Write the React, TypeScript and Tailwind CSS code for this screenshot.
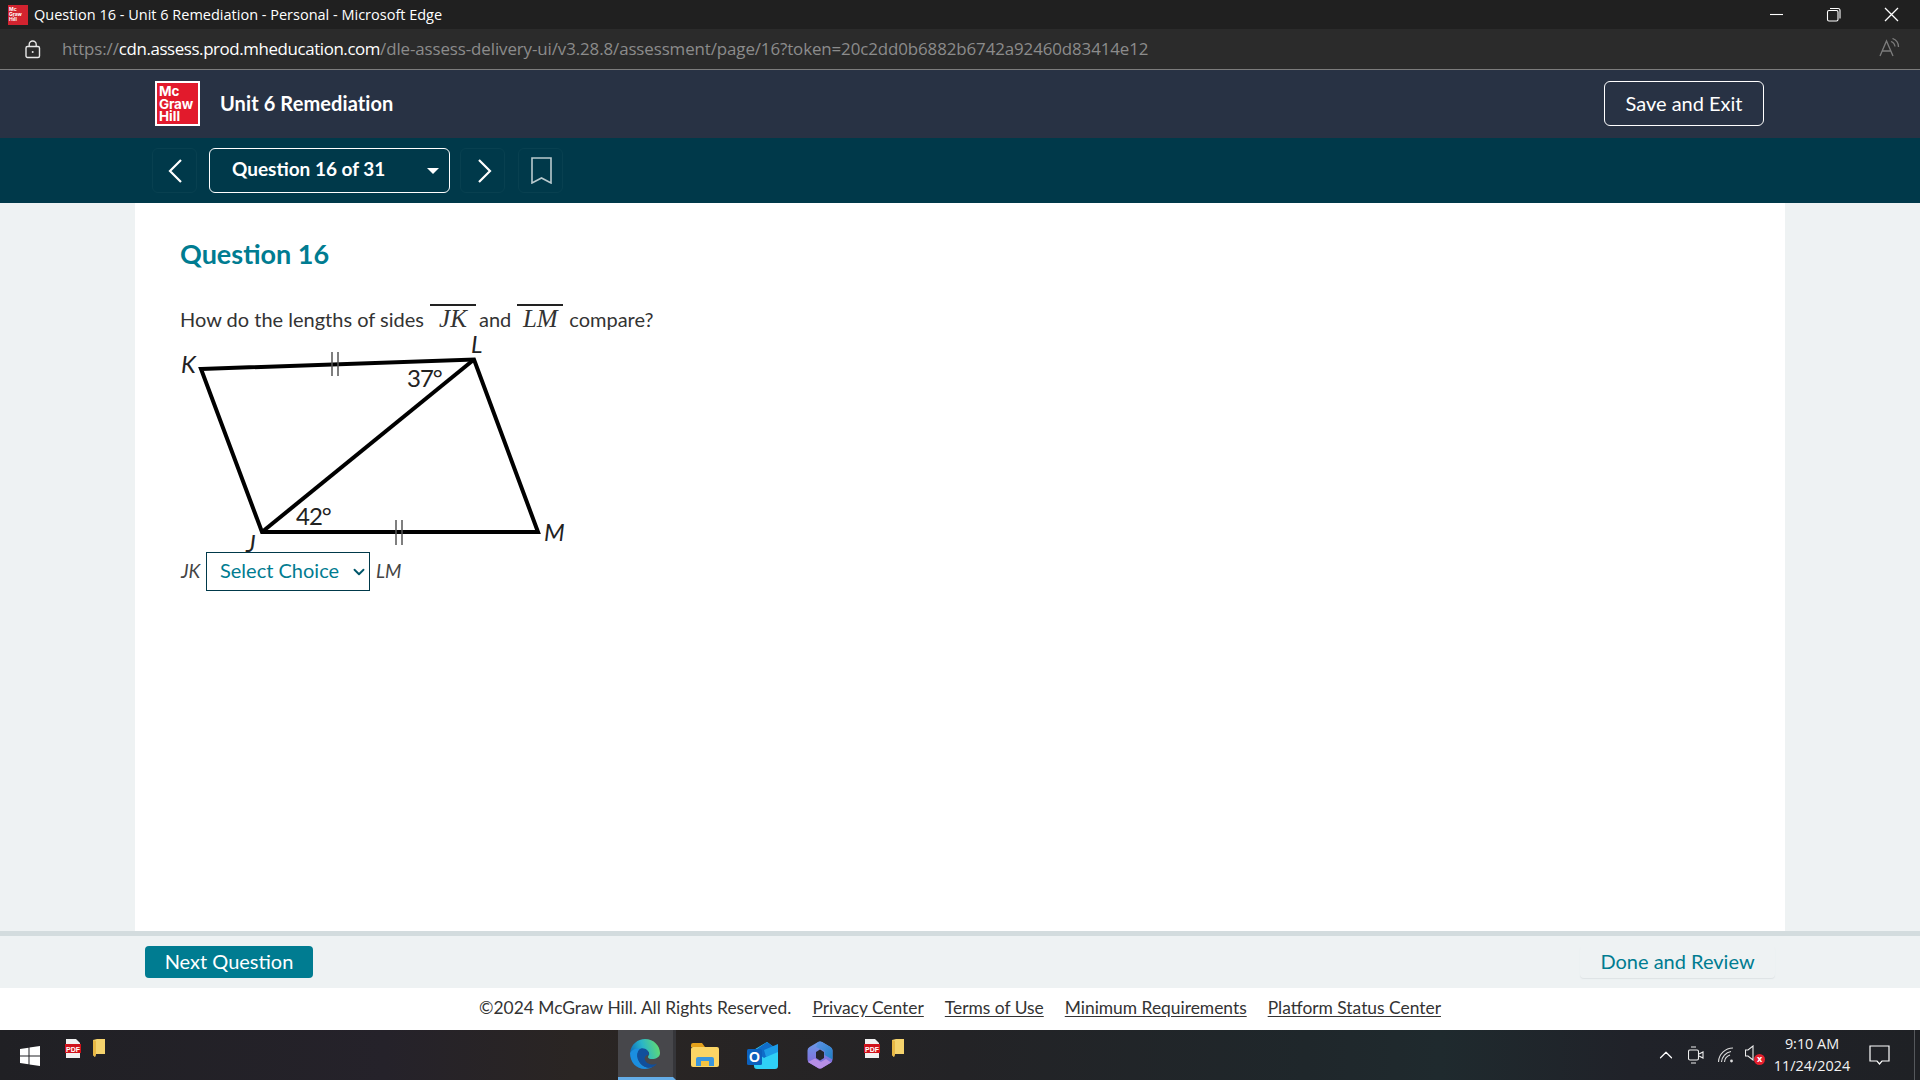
import { ChevronDown, ChevronUp } from "lucide-react";

const ui = "font-['Lato','Open_Sans',sans-serif]";
const segoe = "font-['Open_Sans','Noto_Sans',sans-serif]";

function Logo() {
  return (
    <div className="w-[45px] h-[45px] border-2 border-white bg-[#e21a2c] text-white font-bold text-[13.5px] leading-[12.5px] pl-[2px] pt-[2px] font-['Inter',sans-serif]">
      <div>Mc</div>
      <div className="tracking-[-0.2px]">Graw</div>
      <div>Hill</div>
    </div>
  );
}

function TitleBar() {
  return (
    <div className="h-[29px] bg-[#202020] flex items-center relative shrink-0">
      <div className="ml-2 w-5 h-5 bg-[#d2232f] text-white text-[5px] leading-[5px] font-bold pl-[1px] pt-[2px] font-['Inter',sans-serif]">
        <div>Mc</div>
        <div>Graw</div>
        <div>Hill</div>
      </div>
      <span className={`ml-[6px] text-white text-[14.5px] ${segoe}`}>Question 16 - Unit 6 Remediation - Personal - Microsoft Edge</span>
      <div className="absolute right-0 top-0 h-[29px]">
        <svg width="150" height="29" viewBox="1770 0 150 29" fill="none" stroke="#fff" strokeWidth="1.1">
          <path d="M1770 14.5h13" />
          <rect x="1827.5" y="10.5" width="10.5" height="10.5" rx="1.5" />
          <path d="M1830 8.5h8a2 2 0 0 1 2 2v8" />
          <path d="M1885 8l13 13M1898 8l-13 13" strokeWidth="1.3" />
        </svg>
      </div>
    </div>
  );
}

function AddressBar() {
  return (
    <div className="h-[41px] bg-[#2b2b2b] border-b border-[#7c7c7c] flex items-center relative shrink-0">
      <svg className="ml-[25px]" width="16" height="19" viewBox="0 0 16 19" fill="none" stroke="#e8e8e8" strokeWidth="1.4">
        <rect x="1" y="6.5" width="13.5" height="11" rx="1.5" />
        <path d="M4.2 6.5V4.5a3.5 3.5 0 0 1 7 0v2" />
        <circle cx="7.7" cy="12" r="1" fill="#e8e8e8" stroke="none" />
      </svg>
      <span className={`ml-[21px] text-[16.9px] tracking-[-0.1px] text-[#8c8c8c] ${segoe}`}>
        https://<span className="text-white tracking-[-0.4px]">cdn.assess.prod.mheducation.com</span>/dle-assess-delivery-ui/v3.28.8/assessment/page/16?token=20c2dd0b6882b6742a92460d83414e12
      </span>
      <div className="absolute right-[20px] top-[9px]">
        <svg width="21" height="20" viewBox="0 0 21 20" fill="none" stroke="#7d7d7d" strokeWidth="1.3">
          <path d="M1 18L7.5 3l6.5 15M3.5 13h8" />
          <path d="M12 3.5a6 6 0 0 1 4 5M13.5 0.5a9 9 0 0 1 6 8.5" />
        </svg>
      </div>
    </div>
  );
}

function Header() {
  return (
    <div className="h-[68px] bg-[#283244] flex items-center shrink-0 pl-[155px] pr-[156px] pb-[1px]">
      <Logo />
      <span className={`ml-5 text-white font-bold text-[20px] tracking-[0.1px] pb-[2px] ${ui}`}>Unit 6 Remediation</span>
      <button className={`ml-auto w-[160px] h-[45px] border border-white rounded-md text-white text-[20px] pb-[1px] ${ui}`}>Save and Exit</button>
    </div>
  );
}

function NavBar() {
  const ghost = "h-[45px] w-[45px] flex items-center justify-center rounded-md border border-[#084050]";
  return (
    <div className="h-[65px] bg-[#00394a] flex items-center shrink-0 pl-[152px]">
      <button className={ghost}>
        <svg width="14" height="24" viewBox="0 0 14 24" fill="none" stroke="#fff" strokeWidth="2.2">
          <path d="M13 1L2 12l11 11" />
        </svg>
      </button>
      <button className={`ml-3 w-[241px] h-[45px] border border-white rounded-md flex items-center pl-[22px] pr-[10px] pb-[2px] text-white font-bold text-[19px] ${ui}`}>
        Question 16 of 31
        <span className="ml-auto mt-[2px] w-0 h-0 border-x-[6px] border-x-transparent border-t-[6px] border-t-white" />
      </button>
      <button className={`ml-[10px] pl-[4px] ${ghost}`}>
        <svg width="14" height="24" viewBox="0 0 14 24" fill="none" stroke="#fff" strokeWidth="2.2">
          <path d="M1 1l11 11L1 23" />
        </svg>
      </button>
      <button className={`ml-[13px] pl-[1px] ${ghost}`}>
        <svg width="21" height="27" viewBox="0 0 21 27" fill="none" stroke="#b9cace" strokeWidth="1.6">
          <path d="M1 1h19v25l-9.5-5-9.5 5z" />
        </svg>
      </button>
    </div>
  );
}

function Segment({ text, className }: { text: string; className: string }) {
  return (
    <span className={`inline-block ml-[6px] w-[46px] text-center border-t-2 border-[#222] font-['Liberation_Serif',serif] italic text-[25px] leading-[26px] h-[28px] align-baseline ${className}`}>
      {text}
    </span>
  );
}

function Diagram() {
  return (
    <svg className="block overflow-visible" width="400" height="222" viewBox="180 330 400 222">
      <g fill="none" stroke="#000" strokeWidth="4" strokeLinejoin="miter">
        <path d="M201 369L474 359.5L538 532H262Z" />
        <path d="M262 532L474 359.5" />
      </g>
      <g stroke="#555" strokeWidth="1.5">
        <path d="M332 352v24M338 352v24M396 520v25M402 520v25" />
      </g>
      <g className="font-['Lato',sans-serif]" fill="#222" fontSize="24">
        <text x="181" y="373" fontStyle="italic">K</text>
        <text x="471" y="353" fontStyle="italic">L</text>
        <text x="407" y="387" letterSpacing="-1">37°</text>
        <text x="296" y="525" letterSpacing="-1">42°</text>
        <text x="544" y="541" fontStyle="italic">M</text>
        <text x="246" y="552" fontStyle="italic">J</text>
      </g>
    </svg>
  );
}

function Question() {
  return (
    <div className="flex-1 flex justify-center bg-[#eef2f3] min-h-0">
      <div className={`w-[1650px] bg-white px-[45px] pt-[33px] text-[#333] ${ui}`}>
        <h1 className="text-[27px] leading-[36px] font-bold text-[#007c91]">Question 16</h1>
        <p className="mt-[32px] h-[26px] text-[20px] leading-[30px] text-[#333]">
          How do the lengths of sides<Segment text="JK" className="mr-[3px]" />and<Segment text="LM" className="mr-[6px]" />compare?
        </p>
        <Diagram />
        <div className="relative flex items-center text-[19px] italic text-[#444] h-[39px]">
          <span className="w-[26px] pl-[1px]">JK</span>
          <div className="w-[164px] h-[39px] bg-white border border-[#00394a] flex items-center pl-[13px] pr-[1px] pb-[4px] text-[#007c91] text-[20px] not-italic">
            Select Choice
            <ChevronDown className="ml-auto mt-[4px]" size={18} strokeWidth={2.5} color="#00566a" />
          </div>
          <span className="ml-[6px]">LM</span>
        </div>
      </div>
    </div>
  );
}

function ActionBar() {
  return (
    <div className={`h-[57px] shrink-0 bg-[#eef2f3] border-t-[5px] border-[#d3dcde] flex items-center pl-[145px] pr-[145px] text-[20px] ${ui}`}>
      <button className="w-[168px] h-[32px] bg-[#007c91] rounded-[4px] text-white pb-[2px]">Next Question</button>
      <button className="ml-auto w-[195px] h-[32px] rounded-[4px] text-[#007c91] pb-[2px] shadow-[0_1px_1px_#dde3e5]">Done and Review</button>
    </div>
  );
}

function Legal() {
  const links = ["Privacy Center", "Terms of Use", "Minimum Requirements", "Platform Status Center"];
  return (
    <div className={`h-[42px] shrink-0 bg-white flex items-center justify-center gap-[21px] pb-[2px] text-[17.4px] text-[#333] ${ui}`}>
      <span>©2024 McGraw Hill. All Rights Reserved.</span>
      {links.map((l) => (
        <a key={l} className="underline underline-offset-2" href="#">{l}</a>
      ))}
    </div>
  );
}

function PdfIcon() {
  return (
    <svg width="16" height="19" viewBox="0 0 16 19">
      <path d="M1 0h10l4 4v15H1z" fill="#f1f1f1" />
      <rect x="0" y="5" width="16" height="9" fill="#d0121b" />
      <text x="8" y="12.5" textAnchor="middle" fontSize="7" fontWeight="700" fill="#fff" className="font-['Liberation_Sans',sans-serif]">PDF</text>
    </svg>
  );
}

function FolderIcon() {
  return (
    <svg width="12" height="18" viewBox="0 0 12 18">
      <path d="M0 1l4 -1h8v15H3l-1 3-2-2z" fill="#f5d36d" />
      <path d="M0 1l3 1v13l-1 3-2-2z" fill="#e8b845" />
    </svg>
  );
}

function EdgeIcon() {
  return (
    <svg width="30" height="30" viewBox="0 0 30 30">
      <defs>
        <linearGradient id="edgeTop" x1="0" y1="0.6" x2="1" y2="0.4">
          <stop offset="0" stopColor="#0c6fbd" />
          <stop offset="0.45" stopColor="#2ab5c9" />
          <stop offset="1" stopColor="#63dc70" />
        </linearGradient>
      </defs>
      <path d="M0 14C1 5 8 0 15 0c9 0 15 7 15 14 0 4-4 6-8 6-4 0-5-2-3-4 1-3-2-6-7-6-6 0-11 3-12 4z" fill="url(#edgeTop)" />
      <path d="M0 14c2-4 7-5 11-4.500C6 12 7 22 12 26c3 3 8 3 12 1-3 2-6 3-9 3C6 30 0 23 0 14z" fill="#1b8ee0" />
      <path d="M11 9.500c4-1 8 2 8 6.500-3 0-5 2-4 5 1 3 5 5 9 4.500 1 0 2-.5 3-1-2 3-6 5-10 4-7-2-12-10-9-16 .7-1.500 2-2.700 3-3z" fill="#114f9c" />
    </svg>
  );
}

function ExplorerIcon() {
  return (
    <svg width="28" height="24" viewBox="0 0 28 24">
      <path d="M0 2a2 2 0 0 1 2-2h9l3 4H0z" fill="#e4a11b" />
      <rect x="0" y="4" width="28" height="20" rx="2" fill="#fbd565" />
      <path d="M5 23v-7a2 2 0 0 1 2-2h14a2 2 0 0 1 2 2v7h-5v-5h-8v5z" fill="#3a96dd" />
      <rect x="10" y="18" width="8" height="5" fill="#f5c33f" />
    </svg>
  );
}

function OutlookIcon() {
  return (
    <svg width="31" height="27" viewBox="0 0 31 27">
      <path d="M5 9L20 0l11 8v16a3 3 0 0 1-3 3H10a3 3 0 0 1-3-3z" fill="#2fd0f5" />
      <path d="M7 9L20 0l11 8-14 8z" fill="#0f6cc9" />
      <path d="M17 8L31 2v8L19 15z" fill="#1c9be6" />
      <rect x="0" y="7" width="15" height="16" rx="1.5" fill="#0c61bd" />
      <text x="7.500" y="20" textAnchor="middle" fontSize="14" fontWeight="700" fill="#fff" className="font-['Liberation_Sans',sans-serif]">O</text>
    </svg>
  );
}

function CopilotIcon() {
  return (
    <svg width="26" height="28" viewBox="0 0 26 28">
      <defs>
        <linearGradient id="copLeft" x1="0" y1="0" x2="0" y2="1">
          <stop offset="0" stopColor="#6a9be8" />
          <stop offset="1" stopColor="#8a62d8" />
        </linearGradient>
        <linearGradient id="copTop" x1="0" y1="0" x2="1" y2="1">
          <stop offset="0" stopColor="#5f93e6" />
          <stop offset="1" stopColor="#1f7fc4" />
        </linearGradient>
      </defs>
      <path d="M11 1a4 4 0 0 1 4 0l8.500 5a4 4 0 0 1 2 3.500v9a4 4 0 0 1-2 3.500L15 27a4 4 0 0 1-4 0l-8.500-5a4 4 0 0 1-2-3.500v-9a4 4 0 0 1 2-3.500z" fill="url(#copLeft)" />
      <path d="M11 1a4 4 0 0 1 4 0l8.500 5a4 4 0 0 1 2 3.500v9l-8-4.500V10L9 6z" fill="url(#copTop)" />
      <path d="M1 21l7-3.500 6 3.500 5-3 5 3.500L15 27a4 4 0 0 1-4 0z" fill="#b78fe6" />
      <path d="M9 11l4-2.500 4 2.500v6l-4 2.500-4-2.500z" fill="#26252b" />
    </svg>
  );
}

function Tray() {
  return (
    <div className="ml-auto flex items-center h-full text-white">
      <ChevronUp size={22} strokeWidth={1.3} className="mr-[11px]" />
      <svg width="16" height="20" viewBox="0 0 16 20" fill="none" stroke="#eee" strokeWidth="1.1" className="mr-[14px]">
        <rect x="0.5" y="5" width="10" height="10" rx="1.5" />
        <path d="M11 9l4-2v6l-4-2M3 2h5M3 18h5" />
      </svg>
      <svg width="16" height="16" viewBox="0 0 16 16" fill="none" stroke="#ddd" strokeWidth="1.1" className="mr-[11px]">
        <path d="M0.5 15A14.5 14.5 0 0 1 15 1M3.5 15A11.5 11.5 0 0 1 13 4.5M6.5 15A8 8 0 0 1 12 8" />
        <circle cx="13.5" cy="14" r="1.4" fill="#ddd" stroke="none" />
      </svg>
      <div className="relative w-[21px] h-[20px] mr-[6px]">
        <svg width="9" height="16" viewBox="0 0 9 16" fill="none" stroke="#eee" strokeWidth="1.1">
          <path d="M0.5 5v6h2.5l5 4V1l-5 4z" />
        </svg>
        <span className="absolute left-[9px] top-[9px] w-[11px] h-[11px] rounded-full bg-[#e5202e] text-white text-[9px] leading-[10px] text-center font-bold">x</span>
      </div>
      <div className={`w-[80px] text-center text-[14.4px] leading-[22px] text-[#f2f2f2] pb-[1px] ${segoe}`}>
        <div>9:10 AM</div>
        <div>11/24/2024</div>
      </div>
      <svg width="21" height="21" viewBox="0 0 21 21" fill="none" stroke="#fff" strokeWidth="1.2" className="ml-[17px]">
        <path d="M1 1h19v15h-7l-2.500 3L8 16H1z" />
      </svg>
      <div className="ml-[24px] w-[1px] h-full bg-[#55585c] mr-[5px]" />
    </div>
  );
}

function Taskbar() {
  return (
    <div className="h-[50px] shrink-0 flex items-center bg-[linear-gradient(90deg,#202024_0%,#25222a_20%,#2a2523_30%,#232326_50%,#1f272b_68%,#1f2a2e_75%,#202229_85%,#1f2125_100%)]">
      <svg className="ml-5 mt-[1px]" width="20" height="20" viewBox="0 0 20 20" fill="#fff">
        <path d="M0 3l8.500-1.300V9.500H0zM9.500 1.500L20 0v9.500H9.500zM0 10.500h8.500v7.800L0 17zM9.500 10.500H20V20L9.500 18.500z" />
      </svg>
      <div className="ml-[25px] mb-[14px] flex items-center gap-[12px]">
        <PdfIcon />
        <FolderIcon />
      </div>
      <div className="ml-[513px] w-[58px] h-full bg-[#47474b] border-b-[3px] border-b-[#64ade8] border-r-[3px] border-r-[#36363a] flex items-center justify-center pr-[2px]">
        <EdgeIcon />
      </div>
      <div className="ml-[15px]"><ExplorerIcon /></div>
      <div className="ml-[28px]"><OutlookIcon /></div>
      <div className="ml-[29px] mb-[1px]"><CopilotIcon /></div>
      <div className="ml-[31px] mb-[14px] flex items-center gap-[12px]">
        <PdfIcon />
        <FolderIcon />
      </div>
      <Tray />
    </div>
  );
}

export default function App() {
  return (
    <div className="w-[1920px] h-[1080px] flex flex-col overflow-hidden">
      <TitleBar />
      <AddressBar />
      <Header />
      <NavBar />
      <Question />
      <ActionBar />
      <Legal />
      <Taskbar />
    </div>
  );
}
